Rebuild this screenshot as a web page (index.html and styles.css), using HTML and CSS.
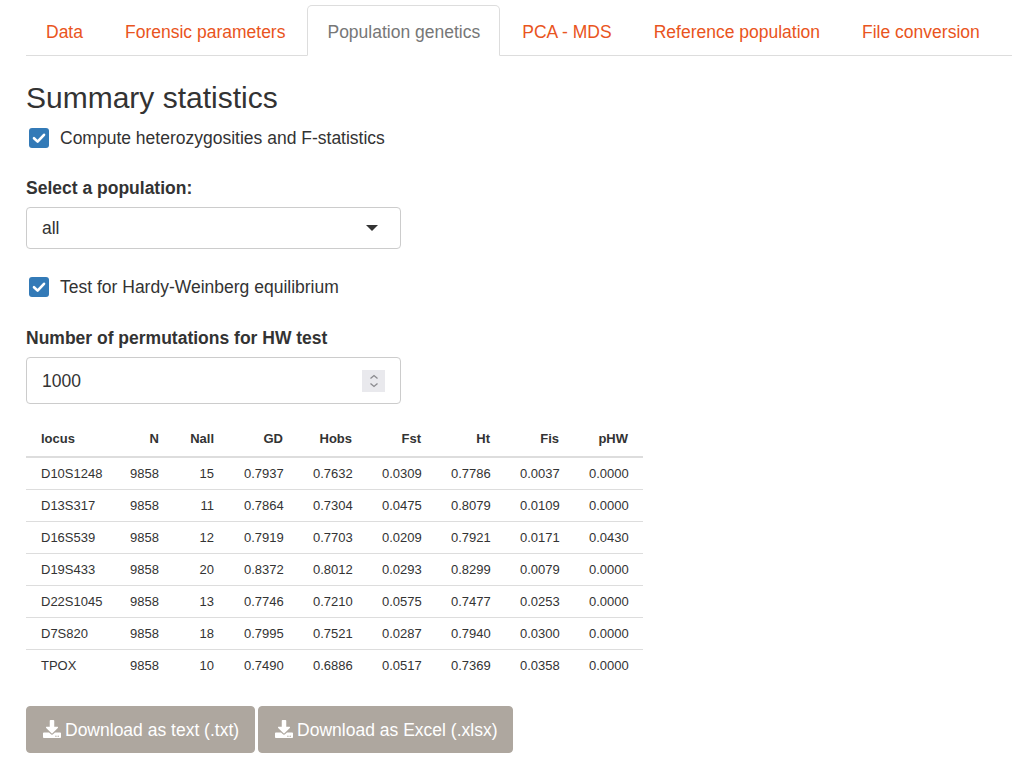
FILE: index.html
```html
<!DOCTYPE html>
<html>
<head>
<meta charset="utf-8">
<link rel="stylesheet" href="styles.css">
</head>
<body>
<div class="page">
  <ul class="tabs">
    <li class="tab"><a>Data</a></li>
    <li class="tab"><a>Forensic parameters</a></li>
    <li class="tab active"><a>Population genetics</a></li>
    <li class="tab"><a>PCA - MDS</a></li>
    <li class="tab"><a>Reference population</a></li>
    <li class="tab"><a>File conversion</a></li>
  </ul>

  <h3 class="title">Summary statistics</h3>

  <div class="check check-first">
    <span class="box"><svg viewBox="0 0 20 20" width="20" height="20"><path d="M5 10.2 L8.6 13.6 L15 6.8" fill="none" stroke="#fff" stroke-width="2.6" stroke-linecap="round" stroke-linejoin="round"/></svg></span>
    <span>Compute heterozygosities and F-statistics</span>
  </div>

  <div class="label label-first">Select a population:</div>
  <div class="select">
    <span>all</span>
    <span class="caret"></span>
  </div>

  <div class="check check-second">
    <span class="box"><svg viewBox="0 0 20 20" width="20" height="20"><path d="M5 10.2 L8.6 13.6 L15 6.8" fill="none" stroke="#fff" stroke-width="2.6" stroke-linecap="round" stroke-linejoin="round"/></svg></span>
    <span>Test for Hardy-Weinberg equilibrium</span>
  </div>

  <div class="label label-second">Number of permutations for HW test</div>
  <div class="numbox">
    <span>1000</span>
    <span class="spin">
      <svg viewBox="0 0 22 22" width="22" height="22"><path d="M7.5 8.5 L11 5.5 L14.5 8.5 M7.5 13.5 L11 16.5 L14.5 13.5" fill="none" stroke="#8a8a8e" stroke-width="1.3"/></svg>
    </span>
  </div>

  <table class="stats">
    <colgroup>
      <col class="c-locus"><col class="c-n"><col class="c-nall"><col class="c-num"><col class="c-num"><col class="c-num"><col class="c-num"><col class="c-num"><col class="c-num">
    </colgroup>
    <thead>
      <tr><th class="left">locus</th><th>N</th><th>Nall</th><th>GD</th><th>Hobs</th><th>Fst</th><th>Ht</th><th>Fis</th><th>pHW</th></tr>
    </thead>
    <tbody>
      <tr><td class="left">D10S1248</td><td>9858</td><td>15</td><td>0.7937</td><td>0.7632</td><td>0.0309</td><td>0.7786</td><td>0.0037</td><td>0.0000</td></tr>
      <tr><td class="left">D13S317</td><td>9858</td><td>11</td><td>0.7864</td><td>0.7304</td><td>0.0475</td><td>0.8079</td><td>0.0109</td><td>0.0000</td></tr>
      <tr><td class="left">D16S539</td><td>9858</td><td>12</td><td>0.7919</td><td>0.7703</td><td>0.0209</td><td>0.7921</td><td>0.0171</td><td>0.0430</td></tr>
      <tr><td class="left">D19S433</td><td>9858</td><td>20</td><td>0.8372</td><td>0.8012</td><td>0.0293</td><td>0.8299</td><td>0.0079</td><td>0.0000</td></tr>
      <tr><td class="left">D22S1045</td><td>9858</td><td>13</td><td>0.7746</td><td>0.7210</td><td>0.0575</td><td>0.7477</td><td>0.0253</td><td>0.0000</td></tr>
      <tr><td class="left">D7S820</td><td>9858</td><td>18</td><td>0.7995</td><td>0.7521</td><td>0.0287</td><td>0.7940</td><td>0.0300</td><td>0.0000</td></tr>
      <tr><td class="left">TPOX</td><td>9858</td><td>10</td><td>0.7490</td><td>0.6886</td><td>0.0517</td><td>0.7369</td><td>0.0358</td><td>0.0000</td></tr>
    </tbody>
  </table>

  <div class="buttons">
    <a class="btn"><svg class="dl" viewBox="0 0 512 512" width="18" height="18"><path fill="#fff" d="M216 0h80c13.3 0 24 10.7 24 24v168h87.7c17.8 0 26.7 21.5 14.1 34.1L269.7 378.3c-7.5 7.5-19.8 7.5-27.3 0L90.1 226.1c-12.6-12.6-3.7-34.1 14.1-34.1H192V24c0-13.3 10.7-24 24-24zm296 376v112c0 13.3-10.7 24-24 24H24c-13.3 0-24-10.7-24-24V376c0-13.3 10.7-24 24-24h146.7l49 49c20.1 20.1 52.5 20.1 72.6 0l49-49H488c13.3 0 24 10.7 24 24zm-124 88c0-11-9-20-20-20s-20 9-20 20 9 20 20 20 20-9 20-20zm64 0c0-11-9-20-20-20s-20 9-20 20 9 20 20 20 20-9 20-20z"/></svg>Download as text (.txt)</a>
    <a class="btn"><svg class="dl" viewBox="0 0 512 512" width="18" height="18"><path fill="#fff" d="M216 0h80c13.3 0 24 10.7 24 24v168h87.7c17.8 0 26.7 21.5 14.1 34.1L269.7 378.3c-7.5 7.5-19.8 7.5-27.3 0L90.1 226.1c-12.6-12.6-3.7-34.1 14.1-34.1H192V24c0-13.3 10.7-24 24-24zm296 376v112c0 13.3-10.7 24-24 24H24c-13.3 0-24-10.7-24-24V376c0-13.3 10.7-24 24-24h146.7l49 49c20.1 20.1 52.5 20.1 72.6 0l49-49H488c13.3 0 24 10.7 24 24zm-124 88c0-11-9-20-20-20s-20 9-20 20 9 20 20 20 20-9 20-20zm64 0c0-11-9-20-20-20s-20 9-20 20 9 20 20 20 20-9 20-20z"/></svg>Download as Excel (.xlsx)</a>
  </div>
</div>
</body>
</html>
```

FILE: styles.css
```css
html, body {
  margin: 0;
  padding: 0;
  background: #fff;
}

body {
  font-family: "Liberation Sans", Arial, sans-serif;
  font-size: 17.5px;
  line-height: 24px;
  color: #333;
}

.page {
  padding: 5px 0 0 26px;
}

.tabs {
  list-style: none;
  margin: 0;
  padding: 0;
  display: flex;
  border-bottom: 1px solid #ddd;
}

.tab {
  margin-right: 2px;
  margin-bottom: -1px;
}

.tab a {
  display: block;
  padding: 14px 19px 11px 19px;
  line-height: 24px;
  border: 1px solid transparent;
  border-radius: 5px 5px 0 0;
  color: #e95420;
}

.tab.active a {
  color: #777;
  background: #fff;
  border-color: #ddd #ddd transparent;
}

.title {
  margin: 25px 0 12px;
  font-size: 30px;
  line-height: 33px;
  font-weight: 500;
}

.check {
  display: flex;
  align-items: center;
  height: 24px;
  padding-left: 3px;
}

.check-first {
  margin-top: 5px;
}

.check-second {
  margin-top: 26px;
}

.box {
  width: 20px;
  height: 20px;
  border-radius: 3px;
  background: #337ab7;
  margin-right: 11px;
  display: flex;
}

.label {
  font-weight: bold;
  line-height: 24px;
}

.label-first {
  margin-top: 26px;
}

.label-second {
  margin-top: 27px;
}

.select {
  margin-top: 7px;
  width: 375px;
  height: 42px;
  box-sizing: border-box;
  border: 1px solid #ccc;
  border-radius: 4px;
  display: flex;
  align-items: center;
  justify-content: space-between;
  padding: 0 22px 0 15px;
}

.caret {
  width: 0;
  height: 0;
  border-top: 6px solid #333;
  border-left: 6px solid transparent;
  border-right: 6px solid transparent;
}

.numbox {
  margin-top: 7px;
  width: 375px;
  height: 47px;
  box-sizing: border-box;
  border: 1px solid #ccc;
  border-radius: 4px;
  display: flex;
  align-items: center;
  justify-content: space-between;
  padding: 0 15px 0 15px;
}

.spin {
  width: 23px;
  height: 22px;
  background: #e9e9ed;
  display: flex;
  align-items: center;
  justify-content: center;
}

.stats {
  margin-top: 17px;
  border-collapse: collapse;
  table-layout: fixed;
  width: 617px;
  font-size: 13px;
  line-height: 19px;
}

.c-locus { width: 89px; }
.c-n { width: 59px; }
.c-nall { width: 55px; }
.c-num { width: 69px; }

.stats th,
.stats td {
  padding: 6px 15px;
  text-align: right;
  white-space: nowrap;
}

.stats th {
  padding: 8px 15px;
  border-bottom: 2px solid #ddd;
  font-weight: bold;
}

.stats td {
  border-top: 1px solid #ddd;
}

.stats tbody tr:first-child td {
  border-top: none;
}

.stats .left {
  text-align: left;
}

.buttons {
  margin-top: 25px;
  display: flex;
  gap: 3px;
}

.btn {
  display: flex;
  align-items: center;
  height: 47px;
  box-sizing: border-box;
  padding: 0 15px 0 16px;
  background: #aea79f;
  border: 1px solid #aea79f;
  border-radius: 4px;
  color: #fff;
  line-height: 24px;
}

.dl {
  margin-right: 4px;
  position: relative;
  top: -1px;
}
```
